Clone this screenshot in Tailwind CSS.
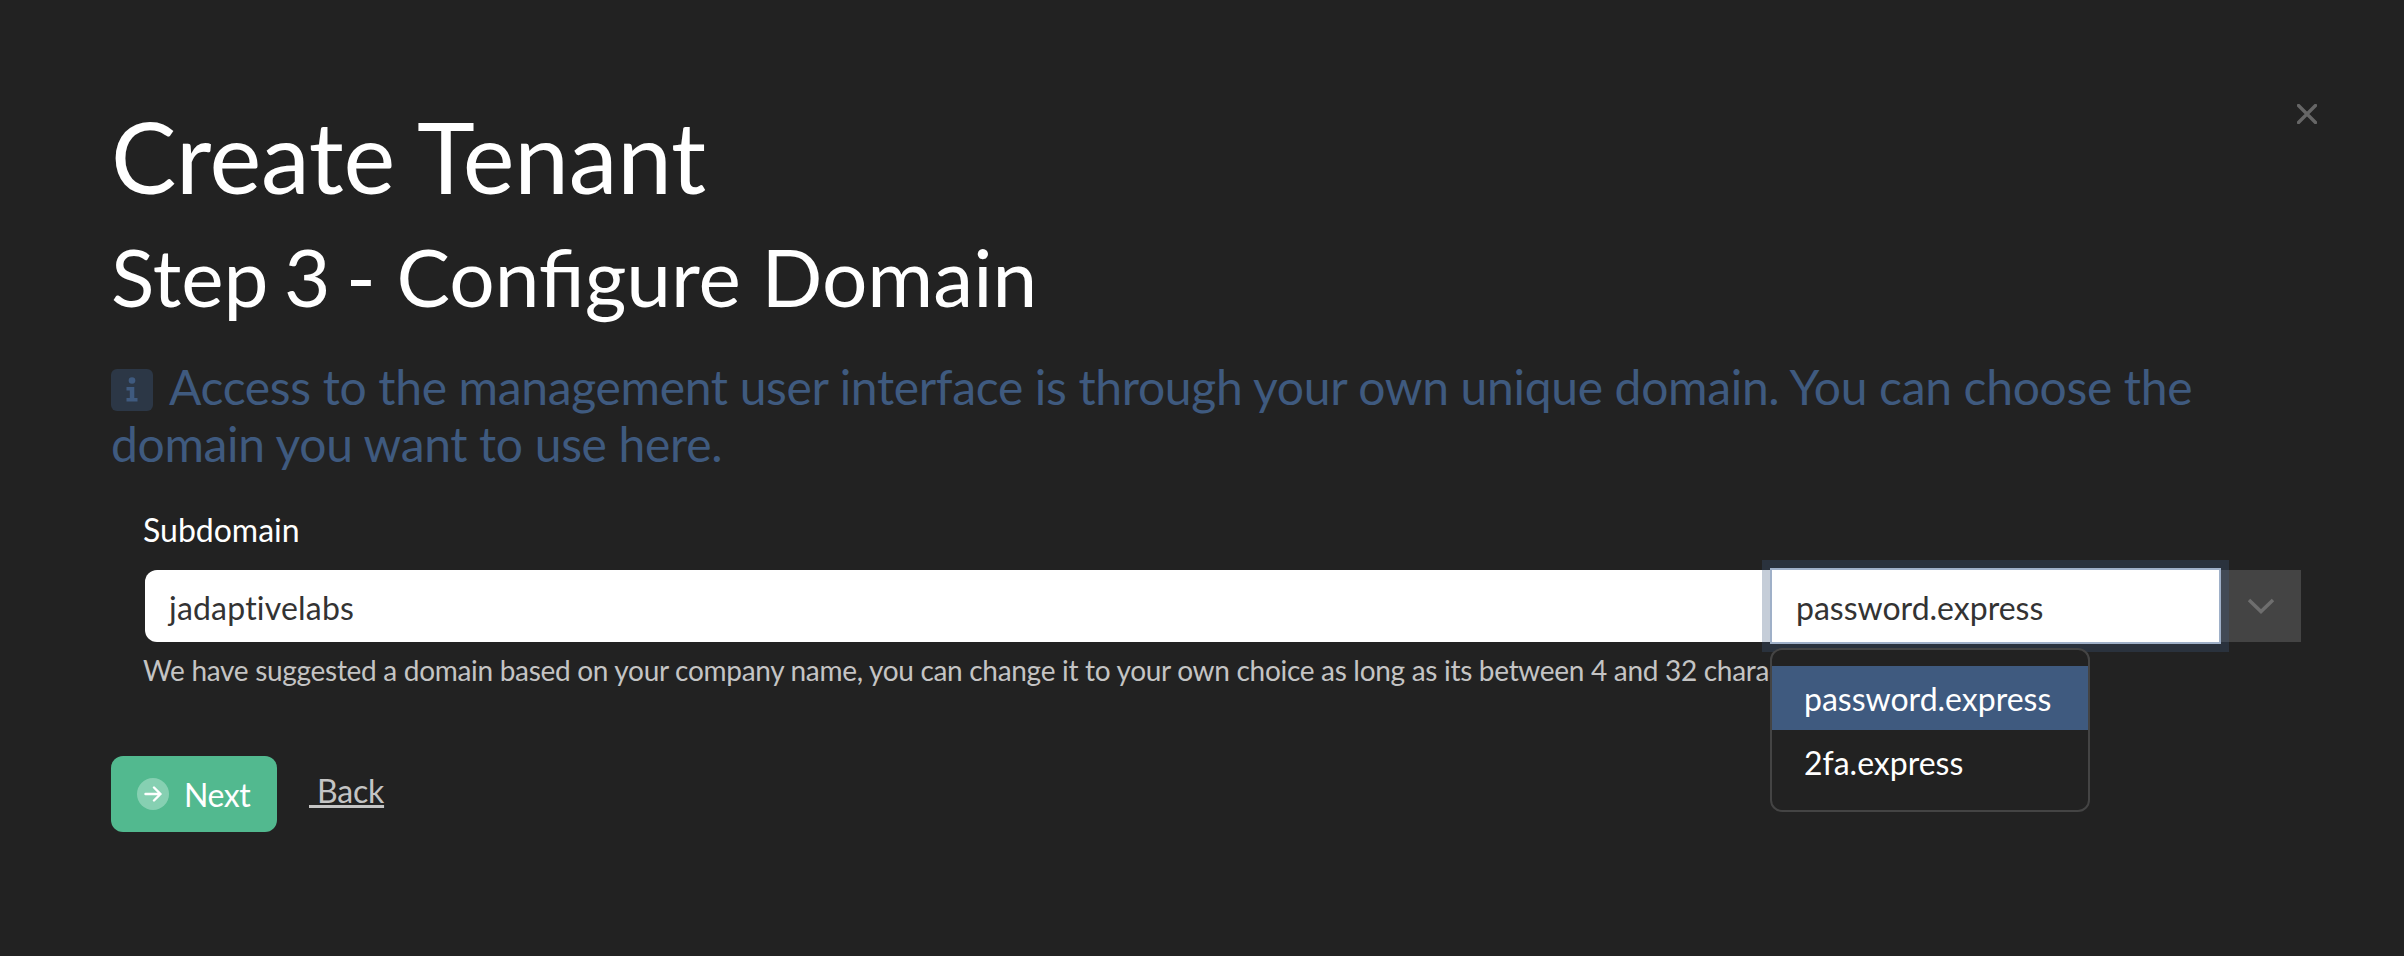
<!DOCTYPE html>
<html><head><meta charset="utf-8"><title>Create Tenant</title>
<script src="https://cdn.jsdelivr.net/npm/@tailwindcss/browser@4"></script></head>
<body class="m-0 h-[956px] w-[2404px] overflow-hidden bg-[#222222] font-['Lato',sans-serif] text-white">
<div class="relative h-full w-full pl-[111px] pr-[100px] pt-[97px]">
  <svg class="absolute left-[2297px] top-[104px] h-[20px] w-[20px]" viewBox="0 0 20 20" fill="none" stroke="#666666" stroke-width="3.4" stroke-linecap="round"><path d="M1.500 1.500L18.500 18.500M18.500 1.500L1.500 18.500"/></svg>
  <h1 class="m-0 text-[98px] leading-[118px] font-normal tracking-[-0.2px]">Create Tenant</h1>
  <h2 class="m-0 mt-[13px] text-[80.2px] leading-[96px] font-normal"><span class="mr-[5px] [word-spacing:-5px]">Step 3 - </span>Configure Domain</h2>
  <p class="m-0 mt-[34px] w-[2100px] text-[48px] leading-[57px] tracking-[-0.33px] text-[#3f5a7f]"><span class="mr-[16px] inline-flex h-[42px] w-[42px] items-center justify-center rounded-[6px] bg-[#2c3746] align-[2px]"><svg class="h-[26px] w-[14px]" viewBox="0 0 14 26" fill="#3f5a7f"><circle cx="7" cy="3.500" r="3.300"/><path d="M1.500 10h7.800v11h3.200v3.500H1.500V21h3.300v-7.500H1.500z"/></svg></span>Access to the management user interface is through your own unique domain. You can choose the domain you want to use here.</p>
  <div class="mt-[38px] pl-[32px] text-[32px] leading-[40px]">Subdomain</div>
  <div class="relative ml-[34px] mt-[20px] flex h-[72px] w-[2156px]">
    <div class="flex h-full w-[1625px] items-center rounded-l-[12px] bg-white pl-[24px] pt-[3px] text-[32px] tracking-[0.2px] text-[#333333] [font-variant-ligatures:none]">jadaptivelabs</div>
    <div class="relative z-10 my-[-2px] flex h-[76px] w-[451px] items-center border-2 border-[#9fb0c8] bg-white pl-[24px] pt-[3px] text-[32px] text-[#333333] shadow-[0_0_0_8px_rgba(63,90,127,0.3)]">password.express</div>
    <div class="flex h-full w-[80px] items-center justify-center bg-[#444444]"><svg class="h-[16px] w-[28px]" viewBox="0 0 28 16" fill="none" stroke="#6e6e6e" stroke-width="3.500"><path d="M2 2l12 11.500L26 2"/></svg></div>
    <div class="absolute left-[1625px] top-[78px] z-20 w-[320px] rounded-[12px] border-2 border-[#444444] bg-[#222222] py-[16px] text-[32px]">
      <div class="flex h-[64px] items-center bg-[#3f5a7f] pl-[32px] pt-[2px]">password.express</div>
      <div class="flex h-[64px] items-center pl-[32px] pt-[2px]">2fa.express</div>
    </div>
  </div>
  <div class="mt-[8px] whitespace-nowrap pl-[32px] text-[28px] leading-[40px] tracking-[-0.3px] text-[#c4c4c4]">We have suggested a domain based on your company name, you can change it to your own choice as long as its between 4 and 32 characters.</div>
  <div class="mt-[66px] flex items-center">
    <button class="flex h-[76px] w-[166px] items-center gap-[15px] rounded-[12px] bg-[#52b98f] pl-[26px] text-[32px] tracking-[-0.4px] text-white"><span class="flex h-[32px] w-[32px] items-center justify-center rounded-full bg-[#86d0b2]"><svg class="h-[18px] w-[18px]" viewBox="0 0 18 18" fill="none" stroke="#ffffff" stroke-width="2.400" stroke-linecap="round" stroke-linejoin="round"><path d="M1.500 9h15M10 2.500L16.500 9 10 15.500"/></svg></span><span class="pt-[2px]">Next</span></button>
    <a class="ml-[32px] mt-[-6px] whitespace-pre text-[32px] tracking-[-0.2px] text-[#c4c4c4] underline"> Back</a>
  </div>
</div>
</body></html>
